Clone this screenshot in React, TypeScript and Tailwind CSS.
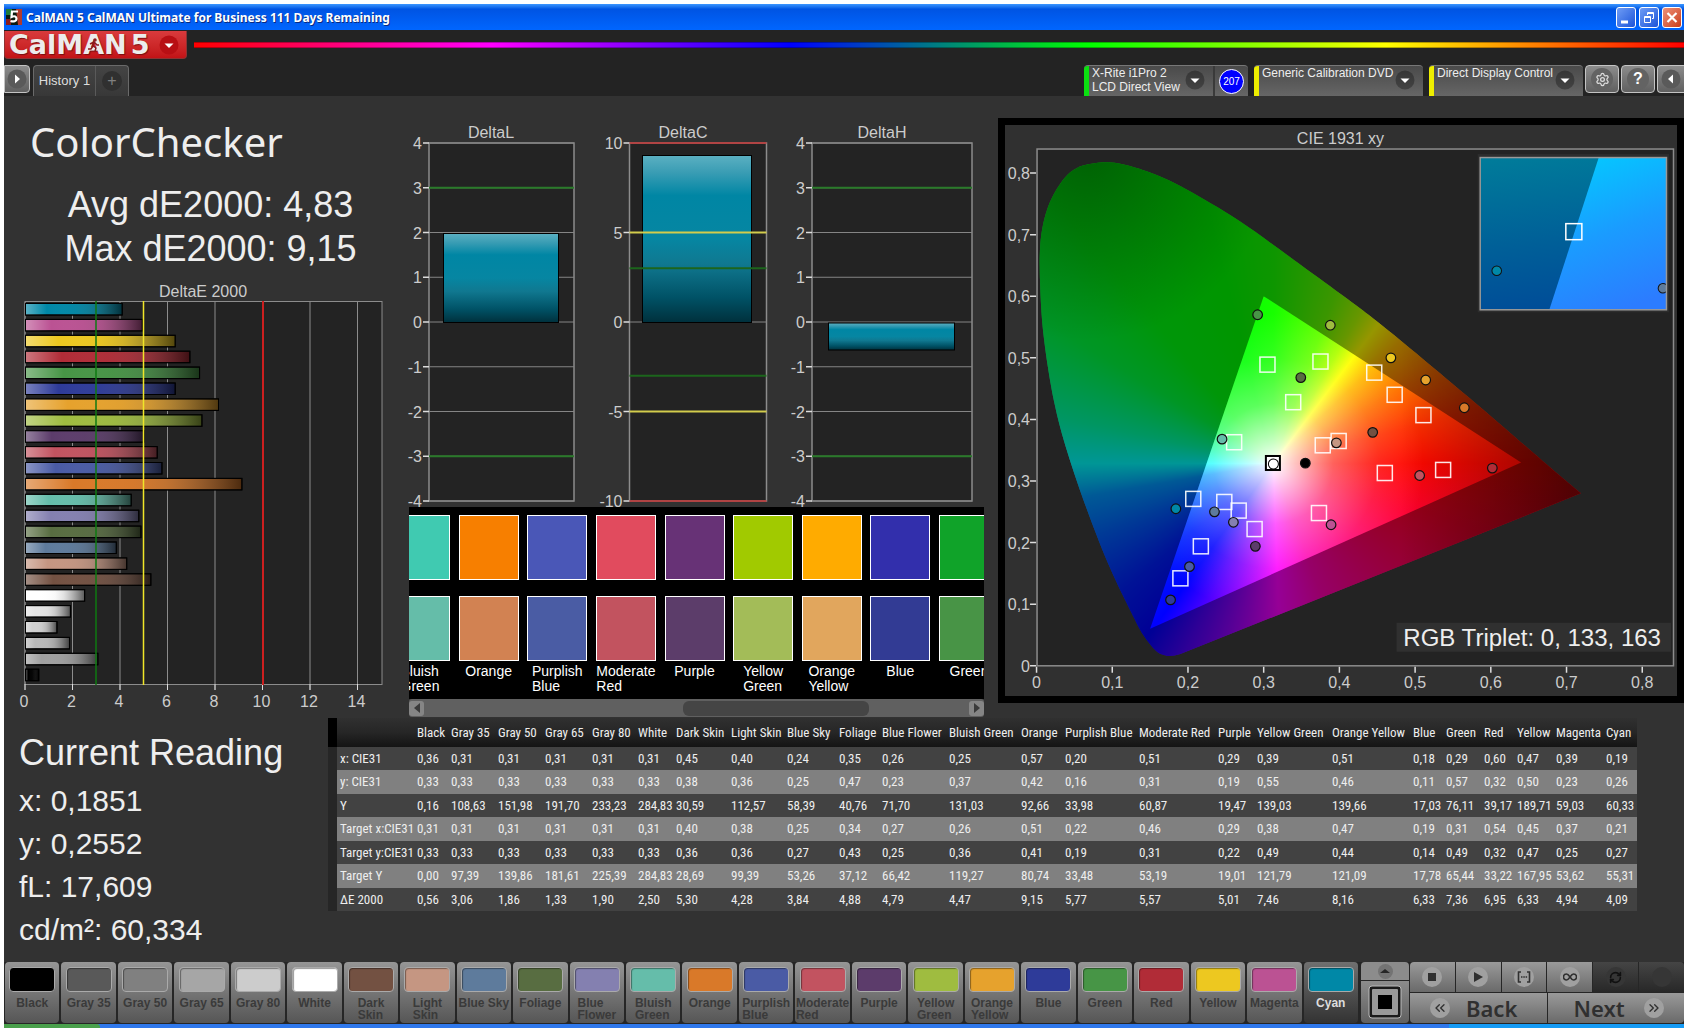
import React from 'react';
import { ChevronsLeft, ChevronsRight, RefreshCw, Settings } from 'lucide-react';

interface Patch {
  name: string;
  color: string;
  // chart colour, where the bar is drawn lighter than the button
  bar?: string;
  col: number;
  values: string[];
}

// values: x, y, Y, target x, target y, target Y, dE 2000
const patches: Patch[] = [
  { name: 'Black', color: '#000000', col: 34, values: ['0,36', '0,33', '0,16', '0,31', '0,33', '0,00', '0,56'] },
  { name: 'Gray 35', color: '#595959', bar: '#a0a0a0', col: 47, values: ['0,31', '0,33', '108,63', '0,31', '0,33', '97,39', '3,06'] },
  { name: 'Gray 50', color: '#808080', bar: '#b9b9b9', col: 47, values: ['0,31', '0,33', '151,98', '0,31', '0,33', '139,86', '1,86'] },
  { name: 'Gray 65', color: '#a6a6a6', bar: '#d0d0d0', col: 47, values: ['0,31', '0,33', '191,70', '0,31', '0,33', '181,61', '1,33'] },
  { name: 'Gray 80', color: '#cccccc', bar: '#e5e5e5', col: 46, values: ['0,31', '0,33', '233,23', '0,31', '0,33', '225,39', '1,90'] },
  { name: 'White', color: '#ffffff', col: 38, values: ['0,31', '0,33', '284,83', '0,31', '0,33', '284,83', '2,50'] },
  { name: 'Dark Skin', color: '#735142', col: 55, values: ['0,45', '0,38', '30,59', '0,40', '0,36', '28,69', '5,30'] },
  { name: 'Light Skin', color: '#c59682', col: 56, values: ['0,40', '0,36', '112,57', '0,38', '0,36', '99,39', '4,28'] },
  { name: 'Blue Sky', color: '#5e7b9c', col: 52, values: ['0,24', '0,25', '58,39', '0,25', '0,27', '53,26', '3,84'] },
  { name: 'Foliage', color: '#586d41', col: 43, values: ['0,35', '0,47', '40,76', '0,34', '0,43', '37,12', '4,88'] },
  { name: 'Blue Flower', color: '#8480b0', col: 67, values: ['0,26', '0,23', '71,70', '0,27', '0,25', '66,42', '4,79'] },
  { name: 'Bluish Green', color: '#65bdaa', col: 72, values: ['0,25', '0,37', '131,03', '0,26', '0,36', '119,27', '4,47'] },
  { name: 'Orange', color: '#d97929', col: 44, values: ['0,57', '0,42', '92,66', '0,51', '0,41', '80,74', '9,15'] },
  { name: 'Purplish Blue', color: '#4a5ba5', col: 74, values: ['0,20', '0,16', '33,98', '0,22', '0,19', '33,48', '5,77'] },
  { name: 'Moderate Red', color: '#c25360', col: 79, values: ['0,51', '0,31', '60,87', '0,46', '0,31', '53,19', '5,57'] },
  { name: 'Purple', color: '#5c3c6b', col: 39, values: ['0,29', '0,19', '19,47', '0,29', '0,22', '19,01', '5,01'] },
  { name: 'Yellow Green', color: '#9fbc40', col: 75, values: ['0,39', '0,55', '139,03', '0,38', '0,49', '121,79', '7,46'] },
  { name: 'Orange Yellow', color: '#e6a22d', col: 81, values: ['0,51', '0,46', '139,66', '0,47', '0,44', '121,09', '8,16'] },
  { name: 'Blue', color: '#2e3b99', col: 33, values: ['0,18', '0,11', '17,03', '0,19', '0,14', '17,78', '6,33'] },
  { name: 'Green', color: '#479546', col: 38, values: ['0,29', '0,57', '76,11', '0,31', '0,49', '65,44', '7,36'] },
  { name: 'Red', color: '#b12c37', col: 33, values: ['0,60', '0,32', '39,17', '0,54', '0,32', '33,22', '6,95'] },
  { name: 'Yellow', color: '#edc820', col: 39, values: ['0,47', '0,50', '189,71', '0,45', '0,47', '167,95', '6,33'] },
  { name: 'Magenta', color: '#bb5293', col: 50, values: ['0,39', '0,23', '59,03', '0,37', '0,25', '53,62', '4,94'] },
  { name: 'Cyan', color: '#0088a7', col: 33, values: ['0,19', '0,26', '60,33', '0,21', '0,27', '55,31', '4,09'] },
];

const rowLabels = ['x: CIE31', 'y: CIE31', 'Y', 'Target x:CIE31', 'Target y:CIE31', 'Target Y', 'ΔE 2000'];

const swatches = [
  { name: 'Bluish Green', actual: '#40cab1', target: '#65bda9' },
  { name: 'Orange', actual: '#f77f00', target: '#d28252' },
  { name: 'Purplish Blue', actual: '#4a57b7', target: '#4a5ca4' },
  { name: 'Moderate Red', actual: '#e14b5e', target: '#c2535f' },
  { name: 'Purple', actual: '#673276', target: '#5c3d6a' },
  { name: 'Yellow Green', actual: '#a1ca00', target: '#a3bc58' },
  { name: 'Orange Yellow', actual: '#ffab00', target: '#e1a65d' },
  { name: 'Blue', actual: '#322fac', target: '#323b94' },
  { name: 'Green', actual: '#10a329', target: '#489446' },
];

const targets: [number, number][] = [
  [0.305, 0.489], [0.375, 0.494], [0.446, 0.476], [0.473, 0.44], [0.511, 0.407], [0.339, 0.428],
  [0.261, 0.363], [0.399, 0.365], [0.378, 0.358], [0.46, 0.313], [0.537, 0.318], [0.373, 0.248],
  [0.207, 0.271], [0.248, 0.266], [0.267, 0.252], [0.288, 0.222], [0.217, 0.194], [0.19, 0.142],
];

const readings: [number, number, string][] = [
  [0.292, 0.57, '#479546'], [0.388, 0.553, '#9fbc40'], [0.468, 0.5, '#edc820'], [0.514, 0.464, '#e6a22d'],
  [0.565, 0.419, '#d97929'], [0.349, 0.468, '#586d41'], [0.245, 0.368, '#65bdaa'], [0.396, 0.362, '#c59682'],
  [0.444, 0.379, '#735142'], [0.355, 0.329, '#000000'], [0.506, 0.309, '#c25360'], [0.602, 0.321, '#b12c37'],
  [0.389, 0.229, '#bb5293'], [0.184, 0.255, '#0088a7'], [0.235, 0.25, '#5e7b9c'], [0.26, 0.233, '#8480b0'],
  [0.289, 0.194, '#5c3c6b'], [0.202, 0.161, '#4a5ba5'], [0.177, 0.107, '#2e3b99'],
];

const locus: [number, number][] = [
  [0.172, 0.016], [0.158, 0.024], [0.141, 0.05], [0.125, 0.087], [0.097, 0.159], [0.068, 0.249], [0.041, 0.346],
  [0.023, 0.43], [0.01, 0.529], [0.005, 0.61], [0.005, 0.685], [0.014, 0.741], [0.032, 0.784], [0.053, 0.808],
  [0.085, 0.817], [0.115, 0.814], [0.156, 0.798], [0.197, 0.774], [0.268, 0.722], [0.35, 0.65], [0.409, 0.597],
  [0.468, 0.541], [0.585, 0.421], [0.668, 0.333], [0.719, 0.28],
];

const num = (s: string) => parseFloat(s.replace(',', '.'));
const cx = (x: number) => 1036.5 + x * 756;
const cy = (y: number) => 665 - y * 615;

// smooth curve through the locus points
const locusPath = () => {
  const p = locus.map(([x, y]) => [cx(x), cy(y)]);
  let d = `M${p[0][0]} ${p[0][1]}`;
  for (let i = 0; i < p.length - 1; i++) {
    const a = p[Math.max(0, i - 1)];
    const b = p[i];
    const c = p[i + 1];
    const e = p[Math.min(p.length - 1, i + 2)];
    d += `C${b[0] + (c[0] - a[0]) / 6} ${b[1] + (c[1] - a[1]) / 6} ${c[0] - (e[0] - b[0]) / 6} ${c[1] - (e[1] - b[1]) / 6} ${c[0]} ${c[1]}`;
  }
  return `${d}L${cx(0.19)} ${cy(0.019)}Q${cx(0.18)} ${cy(0.015)} ${p[0][0]} ${p[0][1]}Z`;
};

const hueWheel =
  'h-full w-full bg-[conic-gradient(at_236px_314px,#18ff00_0deg,#66ff00_20deg,#b0ff00_30deg,#ffff00_37deg,#ffb800_46deg,#ff7000_60deg,#ff3000_75deg,#ff0800_90deg,#ff0030_110deg,#ff0070_135deg,#ff00b0_160deg,#ff00ff_178deg,#b000ff_190deg,#5000ff_205deg,#0000ff_216deg,#0020ff_230deg,#0060ff_247deg,#0098ff_260deg,#00ffff_270deg,#00ffa8_282deg,#00ff40_302deg,#00ff10_320deg,#00ff00_345deg,#18ff00_360deg)]';

const TitleBar: React.FC = () => (
  <div className="flex h-[26px] items-center bg-linear-to-b from-[#3b96ff] via-[#0054e3] via-20% to-[#0066ff] px-[2px]">
    <svg width="16" height="16" viewBox="0 0 16 16" className="shrink-0">
      <rect width="16" height="16" fill="#0b1a10" />
      <path d="M0 0h6v6H0z" fill="#1f7a3a" />
      <path d="M10 0h6v16h-4z" fill="#b03a2e" />
      <path d="M0 10h5v6H0z" fill="#8c1c1c" />
      <path d="M12 2.500H6L5.500 8c3-1.500 5-.5 5 1.700 0 2.600-3 3.300-6 2.300" fill="none" stroke="#fff" strokeWidth="2.200" />
    </svg>
    <h1 className="ml-1 flex-1 pt-[2px] font-['Noto_Sans',sans-serif] text-[12px] leading-5 font-bold whitespace-nowrap text-white [text-shadow:1px_1px_0_#0a2a80]">
      CalMAN 5 CalMAN Ultimate for Business 111 Days Remaining
    </h1>
    <div className="flex gap-[3px]">
      <button aria-label="Minimize" className="h-[21px] w-5 rounded-[3px] border border-white bg-linear-to-br from-[#6f9cf5] to-[#1c52d8]">
        <svg viewBox="0 0 18 19" className="h-full w-full"><path d="M4 14h7" stroke="#fff" strokeWidth="3" /></svg>
      </button>
      <button aria-label="Restore" className="h-[21px] w-5 rounded-[3px] border border-white bg-linear-to-br from-[#6f9cf5] to-[#1c52d8]">
        <svg viewBox="0 0 18 19" className="h-full w-full" fill="none" stroke="#fff">
          <path d="M4.500 8.500h6v6h-6zM4 9.500h7M7.500 7V4.500h6v6H12M7 5.500h7" />
        </svg>
      </button>
      <button aria-label="Close" className="h-[21px] w-5 rounded-[3px] border border-white bg-linear-to-br from-[#ee9078] to-[#c93a14]">
        <svg viewBox="0 0 18 19" className="h-full w-full"><path d="M4.500 5l9 9M13.500 5l-9 9" stroke="#fff" strokeWidth="2.200" /></svg>
      </button>
    </div>
  </div>
);

const Caret: React.FC<{ className?: string }> = ({ className }) => (
  <svg width="20" height="20" viewBox="0 0 20 20" className={className}>
    <circle cx="10" cy="10" r="9.500" className="fill-black/30" />
    <path d="M5.500 8.500h9L10 13z" fill="#fff" />
  </svg>
);

const SourceTab: React.FC<{ lines: string[]; bar: string; width: string; badge?: string }> = ({ lines, bar, width, badge }) => (
  <div className={`flex h-[31px] overflow-hidden rounded-t-[4px] border-t border-[#777] bg-linear-to-b from-[#4a4a4a] to-[#666] ${width}`}>
    <div className={`w-[5px] shrink-0 ${bar}`} />
    <button className="flex flex-1 justify-between pl-[3px] text-left text-[12px] leading-[14px] whitespace-nowrap text-[#eee]">
      <span>
        {lines.map((l) => (
          <span key={l} className="block">{l}</span>
        ))}
      </span>
      <Caret className="mt-1 mr-2 shrink-0" />
    </button>
    {badge && (
      <div className="flex w-[35px] shrink-0 items-center justify-center border-l-2 border-[#3a3a3a]">
        <span className="flex size-[25px] items-center justify-center rounded-full border border-white bg-[#0000ff] text-[10px] text-white">
          {badge}
        </span>
      </div>
    )}
  </div>
);

const iconButton =
  'flex h-7 items-center justify-center rounded-[4px] border border-[#c4c4c4] bg-linear-to-b from-[#8c8c8c] to-[#606060]';

const Header: React.FC = () => (
  <header className="flex h-[66px] flex-col justify-between bg-[#232323]">
    <div className="flex">
      <button aria-label="CalMAN menu" className="mt-px flex h-7 w-[183px] items-center overflow-hidden rounded-b-[4px] border border-t-0 border-[#8d3232] bg-linear-to-b from-[#d93a3c] to-[#c21216] pl-1 text-[#ececec]">
        <span className="relative font-['DejaVu_Sans',sans-serif] text-[27px] leading-6 font-bold [text-shadow:1px_1px_1px_#7a1010]">
          CalMAN
          <svg viewBox="0 0 14 14" className="absolute top-[5px] left-[78px] size-[14px]" fill="none" stroke="#8c1a1a" strokeWidth="1.500">
            <circle cx="8" cy="2" r="1" />
            <path d="M3 6l4-2 3 3h2M7 4L6 8l3 2-1 3M6 8l-2 3H1" />
          </svg>
        </span>
        <span className="ml-1 font-['DejaVu_Sans',sans-serif] text-[27px] leading-6 font-bold [text-shadow:1px_1px_1px_#7a1010]">5</span>
        <svg width="20" height="20" viewBox="0 0 20 20" className="ml-[10px] shrink-0">
          <circle cx="10" cy="10" r="9.500" fill="#b80f14" />
          <path d="M5.500 8.500h9L10 13z" fill="#fff" />
        </svg>
      </button>
      <div className="mt-3 ml-[7px] h-[6px] flex-1 border-y border-black/30 bg-[linear-gradient(90deg,#ff0000,#ff00ff_20%,#0000ff_40%,#00ff00_60%,#ffff00_80%,#ff0000)]" />
    </div>
    <div className="flex items-start">
      <button aria-label="Expand left panel" className={`${iconButton} w-[26px] rounded-l-none`}>
        <svg width="20" height="20" viewBox="0 0 20 20"><circle cx="10" cy="10" r="9.500" fill="#5a5a5a" /><path d="M8 5.500v9l5-4.500z" fill="#fff" /></svg>
      </button>
      <div className="ml-[3px] flex h-[31px] w-24 rounded-t-[4px] border border-b-0 border-[#6a6a6a] bg-linear-to-b from-[#444] to-[#383838] text-[#ddd]">
        <button className="w-[62px] border-r border-[#5a5a5a] text-[13px]">History 1</button>
        <button aria-label="Add history" className="flex flex-1 items-center justify-center">
          <span className="flex size-5 items-center justify-center rounded-full bg-[#303030] text-base leading-4 text-[#808080]">+</span>
        </button>
      </div>
      <div className="ml-auto flex items-start">
        <SourceTab lines={['X-Rite i1Pro 2', 'LCD Direct View']} bar="bg-[#0be010]" width="w-[164px]" badge="207" />
        <SourceTab lines={['Generic Calibration DVD']} bar="bg-[#eeee00]" width="ml-[6px] w-[169px]" />
        <SourceTab lines={['Direct Display Control']} bar="bg-[#eeee00]" width="ml-[6px] w-[154px]" />
        <button aria-label="Settings" className={`${iconButton} ml-[2px] w-[34px]`}>
          <span className="flex size-[22px] items-center justify-center rounded-full bg-[#636363]"><Settings size={15} color="#ddd" /></span>
        </button>
        <button aria-label="Help" className={`${iconButton} ml-[2px] w-[34px]`}>
          <span className="flex size-[22px] items-center justify-center rounded-full bg-[#636363] text-base font-bold text-white">?</span>
        </button>
        <button aria-label="Collapse" className={`${iconButton} ml-[2px] w-[27px] rounded-r-none border-r-0`}>
          <svg width="20" height="20" viewBox="0 0 20 20"><circle cx="10" cy="10" r="9.500" fill="#5a5a5a" /><path d="M12 5.500v9l-5-4.500z" fill="#fff" /></svg>
        </button>
      </div>
    </div>
  </header>
);

const DeltaEChart: React.FC = () => (
  <svg viewBox="4 271 396 440" className="block w-full" fontSize="16" fill="#ccc" role="img" aria-label="DeltaE 2000">
    <defs>
      <linearGradient id="barH">
        <stop offset="0" stopColor="#fff" stopOpacity=".36" />
        <stop offset=".22" stopColor="#fff" stopOpacity="0" />
        <stop offset=".5" stopColor="#777" stopOpacity=".05" />
        <stop offset=".65" stopColor="#555" stopOpacity=".18" />
        <stop offset="1" stopColor="#000" stopOpacity=".65" />
      </linearGradient>
    </defs>
    <text x="203" y="297" textAnchor="middle">DeltaE 2000</text>
    <rect x="25" y="301.500" width="357" height="383" fill="#232323" stroke="#8c8c8c" />
    {[0, 2, 4, 6, 8, 10, 12, 14].map((v) => (
      <g key={v}>
        <path d={`M${25 + v * 23.75} 302V690`} stroke="#8c8c8c" />
        <path d={`M${25 + v * 23.75} 684v6`} stroke="#ddd" />
        <text x={24 + v * 23.75} y="707" textAnchor="middle">{v}</text>
      </g>
    ))}
    {[...patches].reverse().map((p, i) => {
      const w = num(p.values[6]) * 23.65;
      return (
        <g key={p.name} stroke="#000">
          <rect x="25.500" y={303.500 + i * 15.9} width={w} height="11.500" fill={p.bar ?? p.color} />
          <rect x="25.500" y={303.500 + i * 15.9} width={w} height="11.500" fill="url(#barH)" />
        </g>
      );
    })}
    <path d="M96 301v384" stroke="#0f7a12" strokeWidth="1.500" />
    <path d="M143.500 301v384" stroke="#f0e628" strokeWidth="1.500" />
    <path d="M263 301v384" stroke="#cc1f1f" strokeWidth="2" />
  </svg>
);

interface DeltaPlot {
  title: string;
  cx: number;
  x: number;
  w: number;
  max: number;
  step: number;
  bar: [number, number, number, number];
  limits: [number, string][];
}

const deltaPlots: DeltaPlot[] = [
  { title: 'DeltaL', cx: 491, x: 429, w: 145, max: 4, step: 1, bar: [443.5, 233.5, 115, 89], limits: [[3, '#2a7a2a']] },
  { title: 'DeltaC', cx: 683, x: 629.5, w: 137, max: 10, step: 5, bar: [642.5, 155.5, 109, 167], limits: [[3, '#1c651c'], [5, '#d2cc4c'], [10, '#b04444']] },
  { title: 'DeltaH', cx: 882, x: 812, w: 160, max: 4, step: 1, bar: [828.5, 323, 126, 27], limits: [[3, '#2a7a2a']] },
];

const DeltaCharts: React.FC = () => (
  <svg viewBox="400 96 584 411" className="block w-full" fontSize="16" fill="#ccc" role="img" aria-label="DeltaL, DeltaC and DeltaH">
    <defs>
      <linearGradient id="barV" x2="0" y2="1">
        <stop offset="0" stopColor="#5bb0c2" />
        <stop offset=".1" stopColor="#3a9db4" />
        <stop offset=".24" stopColor="#0086a4" />
        <stop offset=".5" stopColor="#0686a2" />
        <stop offset=".65" stopColor="#107890" />
        <stop offset=".85" stopColor="#005266" />
        <stop offset="1" stopColor="#00303c" />
      </linearGradient>
    </defs>
    {deltaPlots.map((p) => {
      const y = (v: number) => 322 - (v * 179) / p.max;
      const ticks: number[] = [];
      for (let v = -p.max; v <= p.max; v += p.step) ticks.push(v);
      return (
        <g key={p.title}>
          <text x={p.cx} y="138" textAnchor="middle">{p.title}</text>
          <rect x={p.x} y="143" width={p.w} height="358" fill="#232323" stroke="#8c8c8c" strokeWidth="1.500" />
          {ticks.map((v) => (
            <g key={v}>
              {(p.max === 4 || v === 0) && <path d={`M${p.x} ${y(v)}h${p.w}`} stroke="#858585" />}
              <path d={`M${p.x - 6} ${y(v)}h6`} stroke="#ddd" strokeWidth="1.500" />
              <text x={p.x - 7} y={y(v) + 6} textAnchor="end">{v}</text>
            </g>
          ))}
          <rect x={p.bar[0]} y={p.bar[1]} width={p.bar[2]} height={p.bar[3]} fill="url(#barV)" stroke="#000" />
          {p.limits.map(([v, c]) => (
            <path key={v} d={`M${p.x} ${y(v)}h${p.w}M${p.x} ${y(-v)}h${p.w}`} stroke={c} strokeWidth="2" />
          ))}
        </g>
      );
    })}
  </svg>
);

const SwatchStrip: React.FC = () => (
  <div className="ml-[9px]">
    <div className="h-48 overflow-hidden bg-black pt-2">
      <div className="-ml-[19px] flex w-[609px] justify-between">
        {swatches.map((s) => (
          <div key={s.name} className="flex w-[60px] shrink-0 flex-col items-center">
            <div className="h-[65px] w-full border border-white" style={{ backgroundColor: s.actual }} />
            <div className="mt-4 h-[65px] w-full border border-white" style={{ backgroundColor: s.target }} />
            <div className="mt-[3px] text-[14px] leading-[15px] text-white">
              {s.name.split(' ').map((w) => (
                <div key={w}>{w}</div>
              ))}
            </div>
          </div>
        ))}
      </div>
    </div>
    <div className="flex h-[18px] items-center rounded-[3px] bg-[#606060]">
      <button aria-label="Scroll left" className="flex size-[15px] items-center justify-center rounded-[3px] bg-[#858585]">
        <svg width="8" height="10"><path d="M7 0v10L1 5z" fill="#3a3a3a" /></svg>
      </button>
      <div className="flex-1 pl-[45%]">
        <div className="h-[15px] w-[65%] rounded-[6px] bg-[#454545]" />
      </div>
      <button aria-label="Scroll right" className="flex size-[15px] items-center justify-center rounded-[3px] bg-[#858585]">
        <svg width="8" height="10"><path d="M1 0v10l6-5z" fill="#3a3a3a" /></svg>
      </button>
    </div>
  </div>
);

const CieChart: React.FC = () => (
  <div className="border-[7px] border-black bg-[#303030]">
    <svg viewBox="1005 125 671 570" className="block w-full" fontSize="16" fill="#ccc" role="img" aria-label="CIE 1931 xy">
      <defs>
        <clipPath id="locus"><path d={locusPath()} /></clipPath>
        <clipPath id="gamut"><path d={`M${cx(0.64)} ${cy(0.33)}L${cx(0.3)} ${cy(0.6)}L${cx(0.15)} ${cy(0.06)}Z`} /></clipPath>
        <clipPath id="inset"><path d="M1480 158h185v151h-185z" /></clipPath>
        <radialGradient id="whitePoint" gradientUnits="userSpaceOnUse" cx="1273" cy="463" r="150">
          <stop offset="0" stopColor="#fff" />
          <stop offset=".15" stopColor="#fff" stopOpacity=".75" />
          <stop offset=".4" stopColor="#fff" stopOpacity=".36" />
          <stop offset=".7" stopColor="#fff" stopOpacity=".12" />
          <stop offset="1" stopColor="#fff" stopOpacity="0" />
        </radialGradient>
        <linearGradient id="redFade" gradientUnits="userSpaceOnUse" x1="1400" x2="1570" y1="0" y2="0">
          <stop offset="0" stopOpacity="0" />
          <stop offset="1" stopOpacity=".45" />
        </linearGradient>
        <radialGradient id="greenFade" gradientUnits="userSpaceOnUse" cx="1085" cy="150" r="190">
          <stop offset="0" stopOpacity=".36" />
          <stop offset="1" stopOpacity="0" />
        </radialGradient>
        <linearGradient id="insetDark" x2=".15" y2="1">
          <stop offset="0" stopColor="#007c9a" />
          <stop offset=".6" stopColor="#005f98" />
          <stop offset="1" stopColor="#004e98" />
        </linearGradient>
        <linearGradient id="insetLight" x1=".3" y1="0" x2=".6" y2="1">
          <stop offset="0" stopColor="#04c8ff" />
          <stop offset=".5" stopColor="#1a9cff" />
          <stop offset="1" stopColor="#2c7cff" />
        </linearGradient>
      </defs>
      <text x="1340" y="144" textAnchor="middle">CIE 1931 xy</text>
      <rect x="1037" y="149" width="635.500" height="516" fill="#232323" stroke="#8c8c8c" strokeWidth="1.500" />
      {[0, 1, 2, 3, 4, 5, 6, 7, 8].map((v) => (
        <g key={v}>
          <path d={`M${cx(v / 10)} 666v6M${1036} ${cy(v / 10)}h-6`} stroke="#ddd" strokeWidth="1.500" />
          <text x={cx(v / 10)} y="687" textAnchor="middle">{v ? `0,${v}` : '0'}</text>
          <text x="1030" y={cy(v / 10) + 6} textAnchor="end">{v ? `0,${v}` : '0'}</text>
        </g>
      ))}
      <g clipPath="url(#locus)">
        <foreignObject x="1037" y="149" width="636" height="516"><div className={hueWheel} /></foreignObject>
        <rect x="1037" y="149" width="636" height="516" fill="#000" fillOpacity=".41" />
        <rect x="1037" y="149" width="636" height="516" fill="url(#greenFade)" />
      </g>
      <g clipPath="url(#gamut)">
        <foreignObject x="1037" y="149" width="636" height="516"><div className={hueWheel} /></foreignObject>
        <rect x="1037" y="149" width="636" height="516" fill="url(#whitePoint)" />
      </g>
      <g clipPath="url(#locus)"><rect x="1037" y="149" width="636" height="516" fill="url(#redFade)" /></g>
      {targets.map(([x, y]) => (
        <rect key={`${x}-${y}`} x={cx(x) - 7.5} y={cy(y) - 7.5} width="15" height="15" fill="none" stroke="#fff" strokeOpacity=".9" strokeWidth="1.500" />
      ))}
      <rect x="1265.500" y="455.500" width="14" height="14" fill="#fff" stroke="#000" strokeWidth="2" />
      <circle cx="1273" cy="463.500" r="5" fill="#fff" stroke="#000" />
      {readings.map(([x, y, c]) => (
        <circle key={c} cx={cx(x)} cy={cy(y)} r="4.800" fill={c} stroke="#111" strokeWidth="1.200" />
      ))}
      <rect x="1477" y="154" width="191" height="158" fill="#2d2d2d" />
      <g clipPath="url(#inset)">
        <rect x="1480" y="158" width="185" height="151" fill="url(#insetDark)" />
        <path d="M1598 157h69v154h-119z" fill="url(#insetLight)" />
        <rect x="1565" y="223.500" width="16" height="16" fill="none" stroke="#fff" strokeWidth="1.500" />
        <circle cx="1496" cy="270.500" r="4.800" fill="#0088a7" stroke="#111" />
        <circle cx="1662" cy="288" r="4.800" fill="#5e7b9c" stroke="#111" />
      </g>
      <rect x="1479.500" y="157.500" width="186" height="152" fill="none" stroke="#999" strokeWidth="1.500" />
      <rect x="1396" y="622" width="274" height="29" fill="#303030" />
      <text x="1660" y="645" textAnchor="end" fontSize="24" fill="#eee">RGB Triplet: 0, 133, 163</text>
    </svg>
  </div>
);

const DataTable: React.FC = () => (
  <table className="mt-px w-[1309px] table-fixed border-collapse text-left font-['Roboto_Condensed','Liberation_Sans',sans-serif] text-[13px] leading-5 whitespace-nowrap text-[#eee]">
    <colgroup>
      <col className="w-[9px]" />
      <col className="w-[78px]" />
      {patches.map((p) => (
        <col key={p.name} style={{ width: p.col }} />
      ))}
    </colgroup>
    <thead>
      <tr className="h-[29px] bg-linear-to-b from-[#303030] via-[#262626] via-50% to-[#141414]">
        <td className="bg-black p-0" />
        <td className="p-0" />
        {patches.map((p) => (
          <th key={p.name} scope="col" className="p-0 pl-[2px] font-normal">{p.name}</th>
        ))}
      </tr>
    </thead>
    <tbody>
      {rowLabels.map((label, r) => (
        <tr key={label} className="h-[23px] bg-[#424242] even:h-6 even:bg-[#808080]">
          <td className="bg-[#262626] p-0" />
          <th scope="row" className="p-0 pl-[3px] font-normal">{label}</th>
          {patches.map((p) => (
            <td key={p.name} className="p-0 pl-[2px]">{p.values[r]}</td>
          ))}
        </tr>
      ))}
    </tbody>
  </table>
);

const Knob: React.FC<{ children?: React.ReactNode; dark?: boolean }> = ({ children, dark }) => (
  <span className={`flex size-5 items-center justify-center rounded-full text-[#303030] ${dark ? 'bg-[#363636]' : 'bg-[#a0a0a0]'}`}>
    {children}
  </span>
);

const control = 'flex h-[30px] min-w-0 items-center bg-linear-to-b from-[#9a9a9a] to-[#6a6a6a]';
const controlDark = 'flex h-[30px] items-center justify-center bg-linear-to-b from-[#454545] to-[#282828]';

const Footer: React.FC = () => (
  <footer className="mt-auto">
    <div className="flex h-[62px] bg-[#262626] pb-px">
      <div className="grid flex-1 grid-cols-24 pl-px">
        {patches.map((p) => {
          const active = p.name === 'Cyan';
          return (
            <button
              key={p.name}
              className={`mr-[2px] flex flex-col items-center rounded-[4px] bg-linear-to-b pt-[5px] ${active ? 'from-[#707070] to-[#333] text-[#ddd]' : 'from-[#969696] to-[#565656] text-[#3a3a3a]'}`}
            >
              <span className="h-[25px] w-[46px] rounded-[4px] border border-[#aaa] shadow-[inset_1px_1px_1px_rgba(0,0,0,0.4)]" style={{ backgroundColor: p.color }} />
              <span className="mt-[5px] text-left text-[12px] leading-3 font-bold whitespace-nowrap">
                {p.name === 'Blue Sky' || p.name.startsWith('Gray')
                  ? p.name
                  : p.name.split(' ').map((w) => <span key={w} className="block">{w}</span>)}
              </span>
            </button>
          );
        })}
      </div>
      <div className="ml-px flex w-12 flex-col gap-px">
        <button aria-label="Up" className="flex h-[18px] items-center justify-center rounded-t-[4px] bg-[#8c8c8c]">
          <span className="flex size-[15px] items-center justify-center rounded-full bg-[#737373]">
            <svg width="10" height="6"><path d="M0 5l5-4 5 4z" fill="#262626" /></svg>
          </span>
        </button>
        <button aria-label="Pattern window" className="flex flex-1 items-center justify-center rounded-b-[4px] bg-linear-to-b from-[#8c8c8c] to-[#606060]">
          <svg width="34" height="34" viewBox="0 0 34 34">
            <rect x="1" y="1" width="32" height="32" rx="3" fill="#1a1a1a" stroke="#bbb" />
            <rect x="4" y="4" width="26" height="26" rx="1" fill="#999" />
            <rect x="10" y="10" width="14" height="14" fill="#000" />
          </svg>
        </button>
      </div>
      <div className="ml-px flex w-[274px] flex-col gap-px">
        <div className="grid grid-cols-6 gap-px">
          <button aria-label="Stop" className={`${control} justify-center rounded-tl-[4px]`}><Knob><span className="size-2 bg-[#303030]" /></Knob></button>
          <button aria-label="Play" className={`${control} justify-center`}><Knob><svg width="10" height="12"><path d="M1 1v10l9-5z" fill="#303030" /></svg></Knob></button>
          <button aria-label="Read series" className={`${control} justify-center`}>
            <Knob>
              <svg width="14" height="12" viewBox="0 0 14 12" fill="none" stroke="#303030" strokeWidth="1.600">
                <path d="M4 1H1.500v10H4M10 1h2.500v10H10M4 6h1.500M6.300 6h1.500M8.600 6h1.500" />
              </svg>
            </Knob>
          </button>
          <button aria-label="Continuous" className={`${control} justify-center`}>
            <Knob>
              <svg width="14" height="8" viewBox="0 0 14 8" fill="none" stroke="#303030" strokeWidth="1.500">
                <path d="M7 4C5.500 1.800 4.500 1 3.500 1a3 3 0 000 6C4.500 7 5.500 6.200 7 4s2.500-3 3.500-3a3 3 0 010 6C9.500 7 8.500 6.200 7 4z" />
              </svg>
            </Knob>
          </button>
          <button aria-label="Refresh" className={controlDark}><Knob dark><RefreshCw size={13} strokeWidth={3} color="#111" /></Knob></button>
          <button aria-label="Record" className={`${controlDark} rounded-tr-[4px]`}><Knob dark /></button>
        </div>
        <div className="grid grid-cols-2 gap-px font-['Noto_Sans',sans-serif] text-[22px] leading-7 font-semibold text-[#303030]">
          <button className={`${control} gap-4 rounded-bl-[4px] pl-5`}><Knob><ChevronsLeft size={16} /></Knob>Back</button>
          <button className={`${control} justify-between rounded-br-[4px] pr-5 pl-[26px]`}>Next<Knob><ChevronsRight size={16} /></Knob></button>
        </div>
      </div>
    </div>
    <div className="flex h-1 bg-[#2f78ec]">
      <div className="w-24 rounded-tr-[3px] bg-[#4aa04c]" />
      <div className="ml-auto w-[14%] bg-[#159bf5]" />
    </div>
  </footer>
);

export default function App() {
  return (
    <div className="flex min-h-screen flex-col bg-white px-1 pt-1 font-['Liberation_Sans',Arial,sans-serif]">
      <TitleBar />
      <Header />
      <main className="flex flex-1 flex-col bg-[#323232]">
        <section className="grid grid-cols-[396fr_584fr_700fr]">
          <div className="min-w-0 pt-[18px] text-[#eee]">
            <h2 className="pl-[26px] font-['Noto_Sans',sans-serif] text-[40px] leading-[56px]">ColorChecker</h2>
            <div className="mt-[13px] pl-[17px] text-center text-[36px] leading-[44px] whitespace-nowrap">
              <p>Avg dE2000: 4,83</p>
              <p>Max dE2000: 9,15</p>
            </div>
            <DeltaEChart />
          </div>
          <div className="min-w-0">
            <DeltaCharts />
            <SwatchStrip />
          </div>
          <div className="min-w-0 pt-[22px] pl-[14px]">
            <CieChart />
          </div>
        </section>
        <section className="flex items-start">
          <div className="w-[324px] shrink-0 pt-[14px] pl-[15px] whitespace-nowrap text-[#eee]">
            <h2 className="text-[36px] leading-[44px]">Current Reading</h2>
            <div className="mt-1 text-[30px] leading-[43px]">
              <p>x: 0,1851</p>
              <p>y: 0,2552</p>
              <p>fL: 17,609</p>
              <p>cd/m²: 60,334</p>
            </div>
          </div>
          <DataTable />
        </section>
        <Footer />
      </main>
    </div>
  );
}
